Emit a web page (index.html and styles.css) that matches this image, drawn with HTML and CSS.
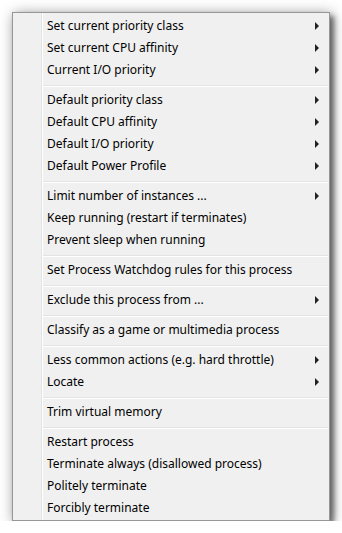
FILE: index.html
```html
<!DOCTYPE html>
<html lang="en">
<head>
  <meta charset="UTF-8">
  <title>Process context menu</title>
  <link rel="stylesheet" href="styles.css">
</head>
<body>

  <!-- 프로세스 컨텍스트 메뉴 -->
  <div class="menu">
    <div class="item sub">Set current priority class</div>
    <div class="item sub">Set current CPU affinity</div>
    <div class="item sub">Current I/O priority</div>
    <div class="sep"></div>
    <div class="item sub">Default priority class</div>
    <div class="item sub">Default CPU affinity</div>
    <div class="item sub">Default I/O priority</div>
    <div class="item sub">Default Power Profile</div>
    <div class="sep"></div>
    <div class="item sub">Limit number of instances ...</div>
    <div class="item">Keep running (restart if terminates)</div>
    <div class="item">Prevent sleep when running</div>
    <div class="sep"></div>
    <div class="item">Set Process Watchdog rules for this process</div>
    <div class="sep"></div>
    <div class="item sub">Exclude this process from ...</div>
    <div class="sep"></div>
    <div class="item">Classify as a game or multimedia process</div>
    <div class="sep"></div>
    <div class="item sub">Less common actions (e.g. hard throttle)</div>
    <div class="item sub">Locate</div>
    <div class="sep"></div>
    <div class="item">Trim virtual memory</div>
    <div class="sep"></div>
    <div class="item">Restart process</div>
    <div class="item">Terminate always (disallowed process)</div>
    <div class="item">Politely terminate</div>
    <div class="item">Forcibly terminate</div>
  </div>

</body>
</html>
```

FILE: styles.css
```css
/* 흰 배경 위에 메뉴 하나 */
body, html {
  margin: 0;
  padding: 0;
  background-color: #fff;
  font-family: 'Noto Sans', 'Open Sans', sans-serif;
}

/* 메뉴 상자: 테두리, 그림자, 왼쪽 아이콘 영역 구분선 */
.menu {
  margin: 12px 0 0 12px;
  width: 316px;
  padding: 2px 0 1px;
  border: 1px solid #979797;
  background:
    linear-gradient(to right, transparent 28px, #e2e3e3 28px, #e2e3e3 29px, #fff 29px, #fff 30px, transparent 30px),
    #f0f0f0;
  box-shadow: 4px 4px 5px rgba(0, 0, 0, 0.45), 2px 2px 13px rgba(0, 0, 0, 0.45);
}

/* 메뉴 항목 */
.item {
  display: flex;
  align-items: center;
  height: 22px;
  padding: 0 10px 0 34px;
  font-size: 12px;
  line-height: 20px;
  color: #000;
  white-space: nowrap;
}

/* 하위 메뉴 화살표 */
.item.sub::after {
  content: '';
  margin-left: auto;
  border-left: 4px solid #222;
  border-top: 4px solid transparent;
  border-bottom: 4px solid transparent;
}

/* 구분선 */
.sep {
  height: 1px;
  margin: 4px 1px 2px 30px;
  background-color: #e2e3e3;
  border-bottom: 1px solid #fff;
}
```
